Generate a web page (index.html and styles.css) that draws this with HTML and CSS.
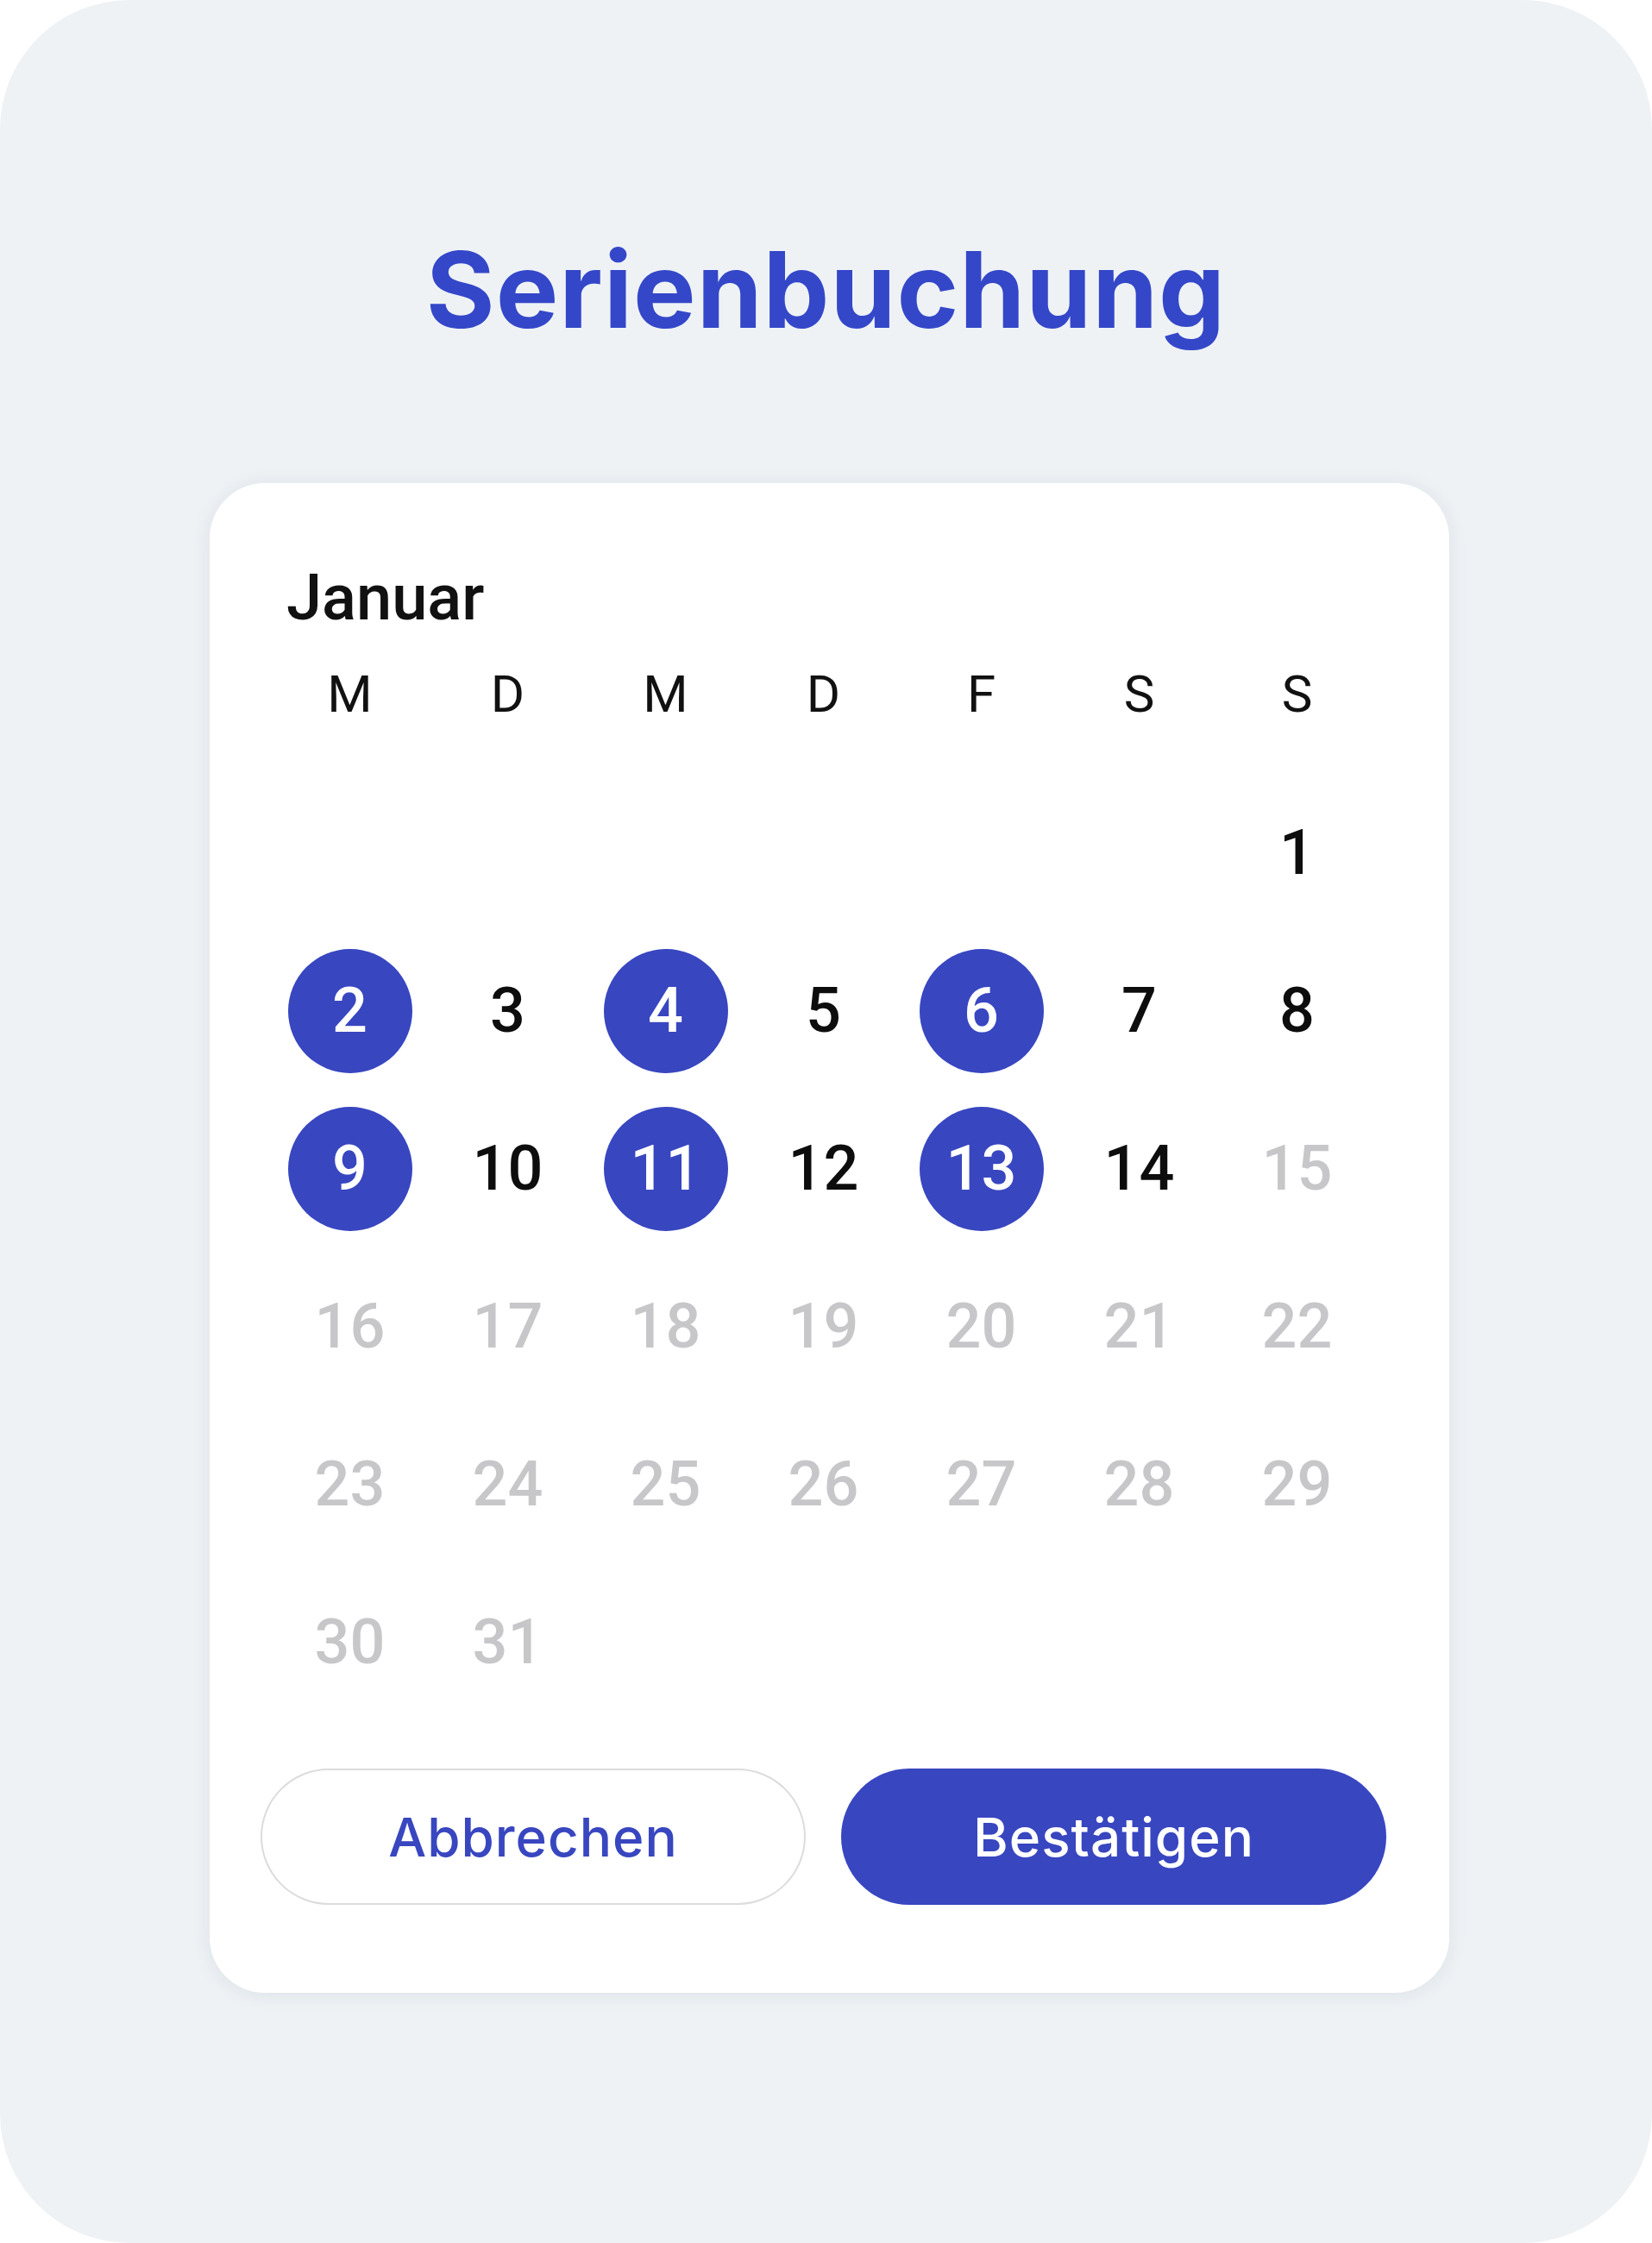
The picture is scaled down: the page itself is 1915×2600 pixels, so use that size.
FILE: index.html
```html
<!DOCTYPE html>
<html lang="de">
<head>
<meta charset="utf-8">
<title>Serienbuchung</title>
<link rel="stylesheet" href="styles.css">
</head>
<body>
<main class="panel">
  <h1 class="title">Serienbuchung</h1>
  <section class="card">
    <h2 class="month">Januar</h2>
    <div class="weekdays">
      <span>M</span><span>D</span><span>M</span><span>D</span><span>F</span><span>S</span><span>S</span>
    </div>
    <div class="days">
      <span class="day empty"></span><span class="day empty"></span><span class="day empty"></span><span class="day empty"></span><span class="day empty"></span><span class="day empty"></span>
      <span class="day">1</span>
      <span class="day"><b class="sel">2</b></span>
      <span class="day">3</span>
      <span class="day"><b class="sel">4</b></span>
      <span class="day">5</span>
      <span class="day"><b class="sel">6</b></span>
      <span class="day">7</span>
      <span class="day">8</span>
      <span class="day"><b class="sel">9</b></span>
      <span class="day">10</span>
      <span class="day"><b class="sel">11</b></span>
      <span class="day">12</span>
      <span class="day"><b class="sel">13</b></span>
      <span class="day">14</span>
      <span class="day off">15</span>
      <span class="day off">16</span><span class="day off">17</span><span class="day off">18</span><span class="day off">19</span><span class="day off">20</span><span class="day off">21</span><span class="day off">22</span>
      <span class="day off">23</span><span class="day off">24</span><span class="day off">25</span><span class="day off">26</span><span class="day off">27</span><span class="day off">28</span><span class="day off">29</span>
      <span class="day off">30</span><span class="day off">31</span>
    </div>
    <div class="actions">
      <button class="btn btn-outline" type="button">Abbrechen</button>
      <button class="btn btn-primary" type="button">Bestätigen</button>
    </div>
  </section>
</main>
</body>
</html>
```

FILE: styles.css
```css
* {
  box-sizing: border-box;
}

html,
body {
  margin: 0;
  padding: 0;
  background: #ffffff;
}

.panel {
  width: 1915px;
  height: 2600px;
  background: #eef2f5;
  border-radius: 150px;
  padding-top: 261px;
  display: flex;
  flex-direction: column;
}

.title {
  margin: 0;
  height: 299px;
  text-align: center;
  font-family: "Inter", "Noto Sans", sans-serif;
  font-weight: 700;
  font-size: 122px;
  line-height: 150px;
  letter-spacing: 1px;
  color: #3447c9;
}

.card {
  margin-left: 243px;
  width: 1437px;
  height: 1750px;
  background: #ffffff;
  border-radius: 64px;
  box-shadow: 0 2px 22px rgba(30, 40, 60, 0.08);
  padding: 93px 0 0 0;
  font-family: "Roboto", "Inter", sans-serif;
  color: #111111;
}

.month {
  margin: 0 0 0 89px;
  font-size: 74px;
  font-weight: 500;
  line-height: 80px;
}

.weekdays {
  margin: 23px 0 0 71px;
  width: 1281px;
  height: 96px;
  display: grid;
  grid-template-columns: repeat(7, 1fr);
  align-items: center;
  justify-items: center;
  font-size: 60px;
  font-weight: 400;
}

.days {
  margin: 45px 0 0 71px;
  width: 1281px;
  display: grid;
  grid-template-columns: repeat(7, 183px);
  grid-auto-rows: 183px;
}

.day {
  display: flex;
  align-items: center;
  justify-content: center;
  font-size: 72px;
  font-weight: 500;
  color: #0d0d0d;
}

.day.off {
  color: #c7c7c9;
}

.sel {
  width: 144px;
  height: 144px;
  border-radius: 50%;
  background: #3846c0;
  color: #ffffff;
  font-weight: 500;
  display: flex;
  align-items: center;
  justify-content: center;
}

.actions {
  margin: 55px 0 0 59px;
  display: flex;
  gap: 41px;
}

.btn {
  width: 632px;
  height: 158px;
  border-radius: 79px;
  font-family: "Inter", "Noto Sans", sans-serif;
  font-size: 62px;
  font-weight: 500;
  letter-spacing: 1px;
  cursor: pointer;
}

.btn-outline {
  background: #ffffff;
  border: 2px solid #dcdcdc;
  color: #3846c0;
}

.btn-primary {
  background: #3846c0;
  border: none;
  color: #ffffff;
}
```
